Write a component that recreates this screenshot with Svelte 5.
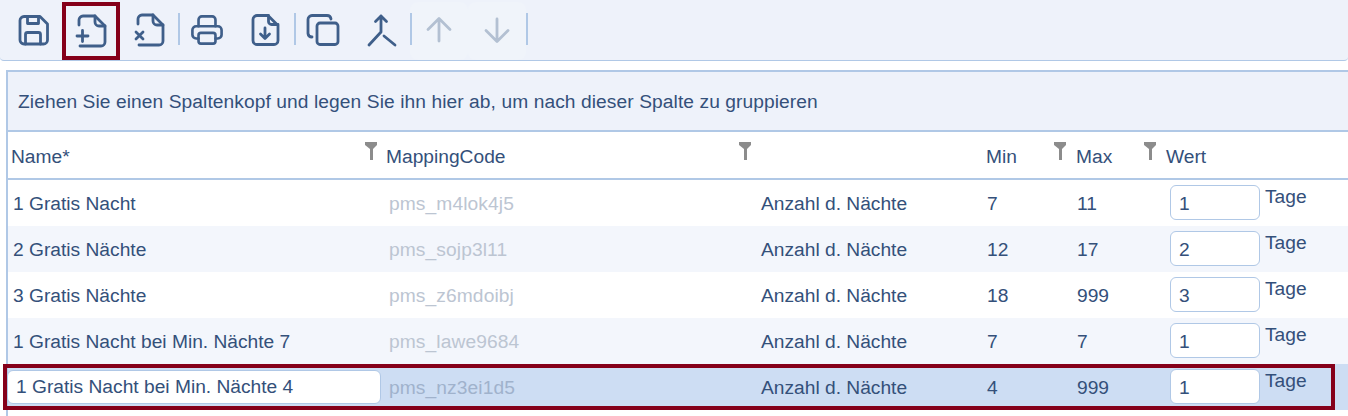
<script>
  const rows = [
    { name: '1 Gratis Nacht', code: 'pms_m4lok4j5', min: '7', max: '11', val: '1' },
    { name: '2 Gratis Nächte', code: 'pms_sojp3l11', min: '12', max: '17', val: '2' },
    { name: '3 Gratis Nächte', code: 'pms_z6mdoibj', min: '18', max: '999', val: '3' },
    { name: '1 Gratis Nacht bei Min. Nächte 7', code: 'pms_lawe9684', min: '7', max: '7', val: '1' },
    { name: '1 Gratis Nacht bei Min. Nächte 4', code: 'pms_nz3ei1d5', min: '4', max: '999', val: '1', selected: true }
  ];
</script>

<div class="page">
  <div class="toolbar">
    <button class="tool">
      <svg viewBox="0 0 32 32"><path d="M7 2.500h16l7.500 7.500v16a4 4 0 0 1-4 4h-19.500a4 4 0 0 1-4-4v-19.500a4 4 0 0 1 4-4z"/><path d="M10.500 2.500v7h11v-7M8.500 30v-9.500a2 2 0 0 1 2-2h11a2 2 0 0 1 2 2v9.500"/></svg>
    </button>
    <button class="tool marked">
      <svg viewBox="0 0 32 32"><path d="M4 10v-5a4 4 0 0 1 4-4h12l10 10v16a4 4 0 0 1-4 4h-21"/><path d="M20 1v6a4 4 0 0 0 4 4h6M2 21h11M7.500 15.500v11"/></svg>
    </button>
    <button class="tool">
      <svg viewBox="0 0 32 32"><path d="M5 10v-5a4 4 0 0 1 4-4h11l10 10v16a4 4 0 0 1-4 4h-20"/><path d="M20 1v6a4 4 0 0 0 4 4h6M3 18l7 7M10 18l-7 7"/></svg>
    </button>
    <span class="sep"></span>
    <button class="tool">
      <svg viewBox="0 0 34 32"><path d="M8 12v-7a3.500 3.500 0 0 1 3.500-3.500h11a3.500 3.500 0 0 1 3.500 3.500v7"/><path d="M8 25h-2.500a4 4 0 0 1-4-4v-5a4 4 0 0 1 4-4h23a4 4 0 0 1 4 4v5a4 4 0 0 1-4 4h-2.500"/><rect x="8" y="19" width="18" height="11.500" rx="2.500"/></svg>
    </button>
    <button class="tool">
      <svg viewBox="0 0 32 32"><path d="M19 1.500h-11a4 4 0 0 0-4 4v21a4 4 0 0 0 4 4h17a4 4 0 0 0 4-4v-15z"/><path d="M19.500 1.500v6a3 3 0 0 0 3 3h6.500M16 14v10M11.500 20l4.500 4.500 4.500-4.500"/></svg>
    </button>
    <span class="sep"></span>
    <button class="tool">
      <svg viewBox="0 0 32 32"><path d="M5 23a4 4 0 0 1-4-3.500v-14a4 4 0 0 1 4-4h15a4 4 0 0 1 4 3.500"/><rect x="10" y="9" width="21" height="21.500" rx="3"/></svg>
    </button>
    <button class="tool">
      <svg viewBox="0 0 32 32"><path d="M16 2v16l-12 13M19 22l11 9M10.500 7.500l5.500-5.500 5.500 5.500"/></svg>
    </button>
    <span class="sep"></span>
    <button class="tool off">
      <svg viewBox="0 0 32 32"><path d="M16 5v22M5 15.500l11-11 11 11"/></svg>
    </button>
    <button class="tool off">
      <svg viewBox="0 0 32 32"><path d="M16 5v22M5 16.500l11 11 11-11"/></svg>
    </button>
    <span class="sep"></span>
  </div>

  <div class="grid">
    <div class="group">Ziehen Sie einen Spaltenkopf und legen Sie ihn hier ab, um nach dieser Spalte zu gruppieren</div>

    <div class="head cols">
      <div class="th first">Name*<svg class="funnel" viewBox="0 0 12 18"><path d="M0 0h12v3l-4 4v11h-3v-11l-5-4z"/></svg></div>
      <div class="th">MappingCode<svg class="funnel" viewBox="0 0 12 18"><path d="M0 0h12v3l-4 4v11h-3v-11l-5-4z"/></svg></div>
      <div class="th"></div>
      <div class="th wide">Min<svg class="funnel" viewBox="0 0 12 18"><path d="M0 0h12v3l-4 4v11h-3v-11l-5-4z"/></svg></div>
      <div class="th wide">Max<svg class="funnel" viewBox="0 0 12 18"><path d="M0 0h12v3l-4 4v11h-3v-11l-5-4z"/></svg></div>
      <div class="th wide">Wert</div>
    </div>

    {#each rows as r, i}
      <div class="row cols" class:alt={i % 2 === 1} class:selected={r.selected}>
        <div class="td name">
          {#if r.selected}
            <input class="edit" value={r.name} />
          {:else}
            {r.name}
          {/if}
        </div>
        <div class="td code">{r.code}</div>
        <div class="td unit">Anzahl d. Nächte</div>
        <div class="td num">{r.min}</div>
        <div class="td num">{r.max}</div>
        <div class="td wert">
          <input class="val" value={r.val} />
          <span class="tage">Tage</span>
        </div>
      </div>
    {/each}
  </div>
</div>

<style>
  :global(body) {
    margin: 0;
    background: #fff;
  }
  .page {
    width: 1348px;
    height: 416px;
    overflow: hidden;
    font-family: "Liberation Sans", Arial, sans-serif;
    font-size: 19.2px;
    color: #34507a;
  }
  .toolbar {
    height: 61px;
    box-sizing: border-box;
    padding: 2px 0 0 4px;
    display: flex;
    align-items: flex-start;
    background: #eef2fa;
    border-bottom: 1px solid #b0c8e6;
    border-bottom-left-radius: 4px;
    border-bottom-right-radius: 4px;
  }
  .tool {
    width: 58px;
    height: 58px;
    margin: 0;
    padding: 0 0 3px;
    box-sizing: border-box;
    border: 0;
    background: none;
    display: flex;
    align-items: center;
    justify-content: center;
  }
  .tool svg {
    width: 32px;
    height: 32px;
    overflow: visible;
    fill: none;
    stroke: #3f5f8a;
    stroke-width: 2.8;
    stroke-linecap: round;
    stroke-linejoin: round;
  }
  .tool.marked {
    border: 4px solid #85001a;
    padding: 0;
  }
  .tool.off {
    background: #f0f4fa;
    border-radius: 8px;
  }
  .tool.off svg {
    stroke: #b3c0d2;
  }
  .sep {
    width: 2px;
    height: 32px;
    margin: 11px -2px 0 0;
    background: #b0c8e6;
    position: relative;
  }
  .grid {
    margin: 9px 0 0 6px;
    padding-bottom: 10px;
    border-top: 2px solid #b0c8e6;
    border-left: 2px solid #b0c8e6;
  }
  .group {
    box-sizing: border-box;
    padding: 2px 0 0 10px;
    display: flex;
    align-items: center;
    background: #eef2fa;
    border-bottom: 2px solid #b0c8e6;
    height: 60px;
    letter-spacing: 0.08px;
  }
  .cols {
    display: grid;
    grid-template-columns: 373px 374px 225px 90px 90px 1fr;
  }
  .head {
    height: 48px;
    box-sizing: border-box;
    border-bottom: 2px solid #b0c8e6;
  }
  .th {
    position: relative;
    padding: 14px 0 0 5px;
  }
  .th.first {
    padding-left: 3px;
  }
  .th.wide {
    padding-left: 6px;
  }
  .funnel {
    position: absolute;
    right: 4px;
    top: 10px;
    width: 12px;
    height: 18px;
    fill: #8c8c8c;
  }
  .row {
    height: 46px;
    align-items: center;
  }
  .row.alt {
    background: #f3f6fc;
  }
  .row.selected {
    background: #cdddf3;
    position: relative;
  }
  .row.selected::after {
    content: "";
    position: absolute;
    left: -5px;
    top: 0;
    width: 1332px;
    height: 46px;
    box-sizing: border-box;
    border: 4px solid #85001a;
    pointer-events: none;
  }
  .td {
    padding: 2px 0 0 8px;
  }
  .name {
    padding-left: 5px;
  }
  .row.selected .name {
    padding: 0;
    margin-left: -1px;
  }
  .code {
    color: #bcc5d2;
    letter-spacing: 0.1px;
  }
  .row.selected .code {
    color: #a0b2cc;
  }
  .unit {
    padding-left: 6px;
  }
  .num {
    padding-left: 7px;
  }
  .wert {
    padding: 0 0 0 10px;
    display: flex;
    align-items: flex-start;
    gap: 5px;
  }
  input {
    font: inherit;
    color: inherit;
    background: #fff;
    box-sizing: border-box;
    border: 1px solid #b0c8e6;
    border-radius: 6px;
    margin: 0;
    outline: none;
  }
  .val {
    width: 90px;
    height: 35px;
    padding: 2px 0 0 8px;
    margin-top: -1px;
  }
  .edit {
    width: 374px;
    height: 34px;
    padding: 0 0 0 8px;
  }
</style>
